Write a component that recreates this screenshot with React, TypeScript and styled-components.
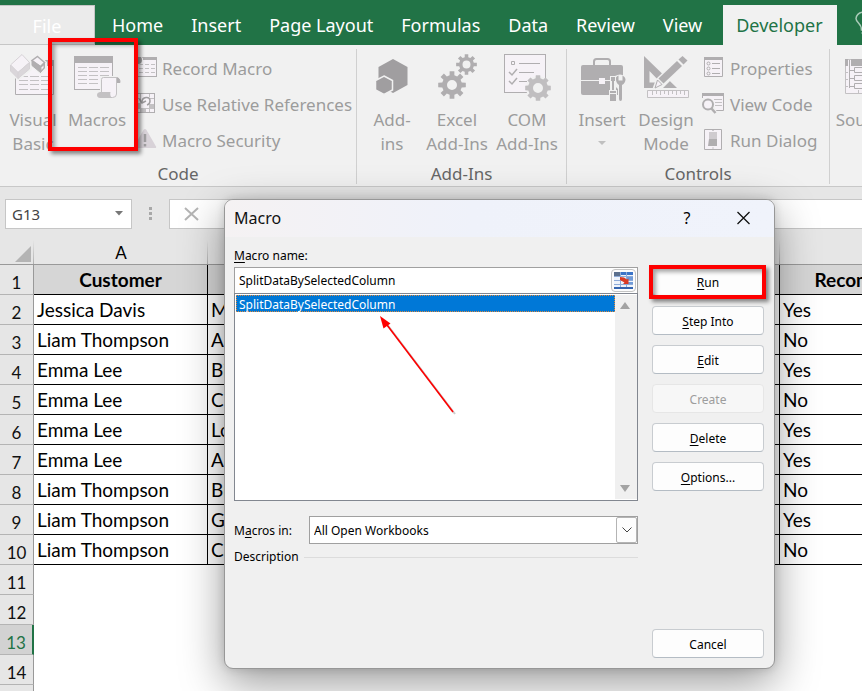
import React from "react";
import styled, { createGlobalStyle, css } from "styled-components";

const uiFont = `"Noto Sans", "Open Sans", sans-serif`;
const cellFont = `Lato, "Open Sans", sans-serif`;
const green = "#217346";

const GlobalStyle = createGlobalStyle`
  *, *::before, *::after { box-sizing: border-box; }
  html, body { margin: 0; background: #fff; overflow: hidden; }
  body { font-family: ${uiFont}; font-size: 17px; color: #000; }
  button, input, select { font: inherit; color: inherit; margin: 0; }
`;

const Page = styled.main`
  position: relative;
  display: flex;
  flex-direction: column;
  height: 100vh;
  overflow: hidden;
`;

/* ---------- Tabs ---------- */
const TabBar = styled.nav`
  flex: none;
  display: flex;
  align-items: stretch;
  padding-top: 5px;
  height: 45px;
  background: ${green};
  overflow: hidden;
`;

const Tab = styled.button<{ $kind?: "file" | "active" }>`
  flex: none;
  padding: 0 14px;
  border: 0;
  background: transparent;
  color: #fff;
  font-size: 18px;
  line-height: 40px;
  white-space: nowrap;
  ${(p) =>
    p.$kind === "file" &&
    css`
      width: 95px;
      margin-right: 3px;
      padding: 2px 0 0;
      line-height: 36px;
      background: #ebebeb;
      border: solid #c6c6c6;
      border-width: 1px 1px 1px 0;
    `}
  ${(p) =>
    p.$kind === "active" &&
    css`
      margin-left: 7px;
      padding: 0 14px 0 13px;
      background: #f1f1f1;
      color: ${green};
    `}
`;

const TellMe = styled.span`
  flex: none;
  margin: 6px 0 0 18px;
  line-height: 0;
`;

/* ---------- Ribbon ---------- */
const Ribbon = styled.section`
  flex: none;
  display: flex;
  height: 142px;
  padding: 4px 0 2px;
  background: #f1f1f1;
  border-bottom: 1px solid #c8c8c8;
`;

const Group = styled.div<{ $width: number }>`
  flex: none;
  display: flex;
  flex-direction: column;
  justify-content: space-between;
  width: ${(p) => p.$width}px;
  border-right: 1px solid #d0d0d0;
`;

const GroupBody = styled.div<{ $pad: number }>`
  display: flex;
  height: 107px;
  padding: 3px 0 0 ${(p) => p.$pad}px;
`;

const GroupLabel = styled.div`
  line-height: 20px;
  text-align: center;
  color: #666;
`;

const LargeButton = styled.button<{ $width: number }>`
  position: relative;
  flex: none;
  display: flex;
  flex-direction: column;
  align-items: center;
  gap: 2px;
  width: ${(p) => p.$width}px;
  height: 104px;
  padding: 0;
  border: 0;
  background: transparent;
  color: #9c9c9c;
  line-height: 24px;
  white-space: pre;
`;

const SmallList = styled.div`
  display: flex;
  flex-direction: column;
  gap: 12px;
  padding: 5px 0 0 5px;
`;

const SmallButton = styled.button`
  display: flex;
  align-items: center;
  gap: 4px;
  height: 24px;
  padding: 0;
  border: 0;
  background: transparent;
  color: #9c9c9c;
  line-height: 24px;
  white-space: nowrap;
`;

const Highlight = styled.span<{ $inset: string }>`
  position: absolute;
  inset: ${(p) => p.$inset};
  border: 4px solid #fe0000;
  box-shadow: 3px 3px 4px rgba(0, 0, 0, 0.45), inset 3px 3px 4px rgba(0, 0, 0, 0.35);
  pointer-events: none;
  z-index: 2;
`;

/* ---------- Formula bar ---------- */
const FormulaBar = styled.section`
  flex: none;
  display: flex;
  align-items: center;
  height: 53px;
  padding-left: 5px;
  background: #e6e6e6;
`;

const NameBox = styled.div`
  flex: none;
  display: flex;
  align-items: center;
  width: 127px;
  height: 30px;
  padding-right: 7px;
  background: #fff;
  border: 1px solid #c6c6c6;
`;

const NameInput = styled.input`
  flex: 1;
  min-width: 0;
  padding: 0 0 0 6px;
  border: 0;
  background: transparent;
  color: #444;
  font-size: 15px;
`;

const Dots = styled.span`
  display: flex;
  flex-direction: column;
  gap: 2px;
  margin: 0 17px;
  i {
    width: 3px;
    height: 3px;
    background: #a8a8a8;
  }
`;

const FormulaBox = styled.div`
  flex: 1;
  display: flex;
  align-items: center;
  height: 30px;
  padding-left: 13px;
  background: #fff;
  border: solid #c6c6c6;
  border-width: 1px 0 1px 1px;
`;

const IconButton = styled.button`
  padding: 0;
  border: 0;
  background: transparent;
  line-height: 0;
`;

/* ---------- Sheet ---------- */
const SheetArea = styled.section`
  flex: 1;
  min-height: 0;
  overflow: hidden;
  background: #fff;
`;

const Sheet = styled.table`
  width: 976px;
  table-layout: fixed;
  border-collapse: separate;
  border-spacing: 0;
  font-family: ${cellFont};
  font-size: 19px;
`;

const ColHead = styled.th`
  height: 25px;
  padding: 2px 0 0;
  background: linear-gradient(#e6e6e6, #b0b0b0) right / 1px 100% no-repeat #e6e6e6;
  border-bottom: 1px solid #999;
  font-weight: 400;
  font-size: 17px;
  line-height: 22px;
`;

const Corner = styled(ColHead)`
  padding: 4px 3px 0 0;
  text-align: right;
  line-height: 0;
`;

const RowHead = styled.th<{ $on?: boolean }>`
  height: 30px;
  padding: 7px 0 0;
  background: ${(p) => (p.$on ? "#d2d2d2" : "#e6e6e6")};
  color: ${(p) => (p.$on ? green : "#111")};
  border-bottom: 1px solid #b4b4b4;
  border-right: ${(p) => (p.$on ? `2px solid ${green}` : "1px solid #999")};
  font-weight: 400;
  font-size: 17px;
  line-height: 22px;
  vertical-align: bottom;
`;

const Cell = styled.td<{ $head?: boolean }>`
  height: 30px;
  padding: 1px 0 0 3px;
  border-right: 1px solid #000;
  border-bottom: 1px solid #000;
  line-height: 26px;
  white-space: nowrap;
  overflow: hidden;
  ${(p) =>
    p.$head &&
    css`
      padding-left: 0;
      background: #d6d6d6;
      font-weight: 700;
      text-align: center;
    `}
`;

/* ---------- Dialog ---------- */
const Dialog = styled.section`
  position: absolute;
  top: 199px;
  left: 224px;
  width: 551px;
  height: 470px;
  display: flex;
  flex-direction: column;
  background: #f0f0f0;
  border: 1px solid #979797;
  border-radius: 9px;
  box-shadow: 0 14px 44px rgba(0, 0, 0, 0.4), 0 0 10px rgba(0, 0, 0, 0.14);
  font-size: 12px;
  line-height: 18px;
  overflow: hidden;
`;

const TitleBar = styled.header`
  display: flex;
  align-items: center;
  height: 37px;
  padding: 0 20px 2px 9px;
  background: linear-gradient(90deg, #f5f2f3, #eff2fa 45%, #f0f3fb);
`;

const Title = styled.h1`
  flex: 1;
  margin: 0;
  font-size: 16px;
  font-weight: 400;
  color: #111;
`;

const HelpButton = styled(IconButton)`
  width: 20px;
  margin-right: 36px;
  font-size: 16px;
  line-height: 20px;
`;

const DialogBody = styled.div`
  flex: 1;
  display: flex;
  gap: 14px;
  padding: 9px 10px 10px 9px;
`;

const Fields = styled.div`
  flex: 1;
  display: flex;
  flex-direction: column;
`;

const FieldLabel = styled.label`
  line-height: 20px;
`;

const NameField = styled.div`
  display: flex;
  align-items: center;
  height: 26px;
  margin-top: 1px;
  padding: 0 1px 0 0;
  background: #fff;
  border: 1px solid #a0a0a0;
  border-bottom: 0;
`;

const MacroInput = styled.input`
  flex: 1;
  min-width: 0;
  padding: 0 4px;
  border: 0;
  background: transparent;
  outline: 0;
`;

const PickButton = styled(IconButton)`
  display: grid;
  place-items: center;
  width: 25px;
  height: 23px;
  background: #fcfcfc;
  border: 1px solid #c4c4c4;
  border-radius: 4px;
`;

const ListFrame = styled.div`
  position: relative;
  display: flex;
  height: 208px;
  padding: 1px 0 1px 1px;
  background: #fff;
  border: 1px solid #828790;
`;

const MacroList = styled.ul`
  flex: 1;
  margin: 0;
  padding: 0;
  list-style: none;
`;

const MacroItem = styled.li`
  height: 17px;
  padding: 0 2px;
  line-height: 17px;
  background: #0078d7;
  color: #fff;
  border: 1px dotted #e08a3c;
`;

const Scroll = styled.div`
  display: flex;
  flex-direction: column;
  justify-content: space-between;
  align-items: center;
  width: 22px;
  padding: 7px 2px 7px 0;
  background: #f0f0f0;
`;

const Arrow = styled.svg`
  position: absolute;
  left: 143px;
  top: 20px;
  pointer-events: none;
`;

const ScopeRow = styled.div`
  display: flex;
  align-items: center;
  justify-content: space-between;
  margin-top: 15px;
  label {
    padding-top: 2px;
  }
`;

const SelectWrap = styled.div`
  position: relative;
  width: 329px;
`;

const Select = styled.select`
  display: block;
  width: 100%;
  height: 28px;
  padding: 2px 4px 0;
  appearance: none;
  background: #fff;
  border: 1px solid #a0a0a0;
  border-radius: 0;
`;

const SelectArrow = styled.span`
  position: absolute;
  right: 1px;
  top: 1px;
  bottom: 1px;
  width: 21px;
  display: grid;
  place-items: center;
  background: #fdfdfd;
  border: 1px solid #b4b4b4;
  border-radius: 2px;
  pointer-events: none;
`;

const Description = styled.div`
  display: flex;
  align-items: center;
  gap: 5px;
  margin-top: 4px;
  &::after {
    content: "";
    flex: 1;
    height: 1px;
    background: #dcdcdc;
  }
`;

const Actions = styled.div`
  display: flex;
  flex-direction: column;
  gap: 10px;
  width: 112px;
  padding-top: 21px;
`;

const ActionButton = styled.button<{ $last?: boolean }>`
  position: relative;
  height: 29px;
  padding: 2px 0 0;
  background: #fdfdfd;
  border: 1px solid #c8ccd0;
  border-bottom-color: #b4bcc4;
  border-radius: 4px;
  ${(p) => p.$last && "margin-top: auto;"}
  &:disabled {
    background: #f7f7f7;
    border-color: #e6e6e6;
    color: #9d9d9d;
  }
`;

const Key = styled.span`
  text-decoration: underline;
  text-underline-offset: 2px;
`;

/* ---------- Icons ---------- */
const MID = "#b0aeb0";
const DARK = "#a09ea0";
const PALE = "#f6f2f7";
const LINE = "#c3c1c3";
const BASE = "#f1f1f1";

const gear = (cx: number, cy: number, outer: number, inner: number, hole: number) => {
  const points: string[] = [];
  for (let i = 0; i < 8; i++) {
    const a = (i * Math.PI) / 4;
    const spots: [number, number][] = [
      [-0.24, inner],
      [-0.17, outer],
      [0.17, outer],
      [0.24, inner],
    ];
    spots.forEach(([d, r]) =>
      points.push(`${(cx + r * Math.cos(a + d)).toFixed(2)} ${(cy + r * Math.sin(a + d)).toFixed(2)}`)
    );
  }
  return `M${points.join("L")}ZM${cx - hole} ${cy}a${hole} ${hole} 0 1 0 ${hole * 2} 0a${hole} ${hole} 0 1 0 ${-hole * 2} 0Z`;
};

const VisualBasicIcon = () => (
  <svg width="46" height="54" viewBox="0 0 46 54">
    <path d="M5.500 14v28.500h38V8.500" fill={PALE} stroke={MID} />
    <path d="M35 8h9v6h-9z" fill={MID} />
    <path d="M9 24.500h33M9 28.500h33M9 32.500h33M9 37.500h33" stroke={LINE} strokeDasharray="9 2" />
    <path d="M12 0 22 11v7L8 29-1 20v-8z" fill={BASE} />
    <path d="M12 2.500 19.500 10.500 8 20.500 .5 13z" fill={PALE} stroke="#d6d2d6" />
    <path d="M.5 13v6L8 26.500v-6zM19.500 10.500v6.500L8 26.500v-6z" fill="#dad6da" stroke="#d6d2d6" />
    <path d="M27 2 37 10v7l-6 6-11-9V9z" fill={BASE} />
    <path d="M27.500 4.500 34.500 10.500 30.500 14.500 22 8.500z" fill={PALE} stroke={MID} strokeWidth="1.500" />
    <path d="M22 8.500v5L30.500 20.500v-6zM34.500 10.500V16L30.500 20.500v-6z" fill={MID} stroke={MID} />
    <path d="M31.500 15.500 33.500 13.500v2l-2 2.500z" fill={PALE} />
  </svg>
);

const MacrosIcon = () => (
  <svg width="48" height="54" viewBox="0 0 48 54">
    <rect x="1.500" y="4.500" width="38" height="33" fill={PALE} stroke={MID} />
    <path d="M1 4h39v7H1z" fill={MID} />
    <path d="M5 15.500h32M5 19.500h32M5 23.500h32M5 27.500h20M5 31.500h20" stroke={LINE} strokeDasharray="9 2" />
    <path d="M27 24h20v7h-2v16H24v-8h3z" fill={BASE} />
    <path d="M43 25.500q4 0 4 5h-4z" fill={MID} stroke={MID} />
    <path d="M28.500 41V27.500q0-2 2-2h13v16.500q0 3.500-4 3.500H34z" fill={PALE} stroke={LINE} />
    <path d="M27 40h10.500q-1 3.500 1.500 6H27q-3-.5-3-3t3-3z" fill={LINE} />
  </svg>
);

const RecordIcon = () => (
  <svg width="24" height="24" viewBox="0 0 24 24">
    <rect x="2.500" y=".500" width="20" height="19" fill={PALE} stroke={MID} />
    <path d="M9 0h14v3H9z" fill={MID} />
    <path d="M5 7.500h16M5 11.500h16M5 15.500h16" stroke={LINE} strokeDasharray="4 2" />
    <circle cx="4" cy="3" r="5" fill={BASE} />
    <circle cx="4" cy="3" r="4" fill={DARK} />
  </svg>
);

const RelativeIcon = () => (
  <svg width="24" height="24" viewBox="0 0 24 24">
    <rect x="1.500" y=".5" width="19" height="19" fill={PALE} stroke={MID} />
    <path d="M2 11h4v4H2zM15 11h5v4h-5zM6 15h5v4H6z" fill={LINE} />
    <path d="M6.500 1v18M11.500 15v4M15.500 1v3M15.500 11v8M2 15.500h18M2 10.500h4M16 5.500h4M2 5.500h4" stroke={LINE} />
    <path d="M8 9q0-4 4-4.500t4 3.500q0 3-3 4" fill="none" stroke={DARK} strokeWidth="1.500" />
    <path d="M5.500 6 8 10l4-2" fill="none" stroke={DARK} strokeWidth="1.500" />
  </svg>
);

const WarningIcon = () => (
  <svg width="24" height="24" viewBox="0 0 24 24">
    <path d="M9.500 1q1.500-2 3 0l9.500 16.500q.5 1.500-1 1.500H1q-1.500 0-1-1.500z" fill="#d8d2d8" />
    <path d="M11 5v8M11 15v2.500" stroke={DARK} strokeWidth="2.500" />
  </svg>
);

const AddInsIcon = () => (
  <svg width="36" height="54" viewBox="0 0 36 54">
    <path d="M19 7 33.500 15v18L19 41 4.500 33V15z" fill={DARK} />
    <path d="M10 24 18.500 28.500v9.500L10 42.500 1.500 38v-9.500z" fill={DARK} stroke={BASE} strokeWidth="1.500" />
  </svg>
);

const ExcelGearsIcon = () => (
  <svg width="42" height="54" viewBox="0 0 42 54">
    <path d={gear(30.5, 12.5, 10.5, 7.5, 4)} fill={MID} fillRule="evenodd" />
    <path d={gear(16, 33, 14, 10, 5)} fill={MID} fillRule="evenodd" />
  </svg>
);

const ComIcon = () => (
  <svg width="48" height="54" viewBox="0 0 48 54">
    <rect x="1.500" y="2.500" width="41" height="38" fill={PALE} stroke={MID} />
    <path d="M8.500 9.500h3v3h-3zM16 11.500h21M16 20.500h15M16 29.500h8" fill="none" stroke={MID} />
    <path d="m6 20 3 3 5-6M6 29l3 3 5-6" fill="none" stroke={MID} strokeWidth="1.500" />
    <circle cx="35" cy="36" r="12" fill={BASE} />
    <path d={gear(35, 36, 13, 10, 5)} fill="#c0bec0" fillRule="evenodd" />
  </svg>
);

const ToolboxIcon = () => (
  <svg width="48" height="54" viewBox="0 0 48 54">
    <path d="M16 13V9.500q0-2.500 2.500-2.500h11q2.500 0 2.500 2.500V13" fill="none" stroke={MID} strokeWidth="2" />
    <rect x="3" y="13" width="42" height="30" rx="2" fill={MID} />
    <path d="M3 28.500h42" stroke={BASE} />
    <path d="M21 26h6v6h-6z" fill={PALE} />
    <path d="M32 24h6v14h1v12h-8V38h1z" fill={BASE} />
    <path d="M37 24q5-3 10 0l1 8-3 4v15h-5V37l-3-3z" fill={BASE} />
    <path d="M33 25h4v4h-1v9h-2v-9h-1zM32 39h6v2h-6zM32 42h6v7h-6z" fill={MID} />
    <path d="M38 25.500q1-1.500 2.500-2v5h4v-5q2.500 1 3 3.500 0 4-3.500 6v14q0 2-1.500 2t-1.500-2V33Q37.500 31 38 25.500z" fill={MID} />
  </svg>
);

const DesignIcon = () => (
  <svg width="46" height="54" viewBox="0 0 46 54">
    <path d="M1 4 34 36H1zM6.500 19v11.500h11z" fill={MID} fillRule="evenodd" />
    <path d="m9 38 4-11L38 3l8 7-26 26z" fill={BASE} />
    <path d="M15.500 26.500 34 9l5 5-18.500 17.500z" fill={MID} />
    <path d="m35.500 7.500 4-3.500 5 4.500-4 4z" fill={MID} />
    <path d="m14.500 28 4.500 4.500-7 3.500z" fill={PALE} stroke={MID} />
    <path d="M4.500 38.500h41v7h-41z" fill={PALE} stroke={LINE} />
    <path d="M9.500 39v4M13.500 39v3M17.500 39v4M21.500 39v3M25.500 39v4M29.500 39v3M33.500 39v4M37.500 39v3M41.500 39v4" stroke={LINE} />
  </svg>
);

const PropertiesIcon = () => (
  <svg width="24" height="24" viewBox="0 0 24 24">
    <path d="M2.500.5h18v19h-18z" fill={PALE} stroke={MID} />
    <path d="M2 0h19v3H2z" fill={MID} />
    <path d="M10 6.500h8M10 11.500h8M10 16.500h8" stroke={MID} />
    <g fill="none" stroke={MID}>
      <circle cx="6.500" cy="6.500" r="1.500" />
      <circle cx="6.500" cy="11.500" r="1.500" />
      <circle cx="6.500" cy="16.500" r="1.500" />
    </g>
  </svg>
);

const ViewCodeIcon = () => (
  <svg width="24" height="24" viewBox="0 0 24 24">
    <path d="M.5.500h21v17H.5z" fill={PALE} stroke={MID} />
    <path d="M0 0h22v3H0z" fill={MID} />
    <path d="M12 6.500h8M13 9.500h7M13 12.500h7" stroke={LINE} />
    <path d="M-1 5h9q5 3 4 8l3 6H0z" fill={BASE} />
    <circle cx="6" cy="11.500" r="5" fill={PALE} stroke={MID} strokeWidth="2" />
    <path d="m9.500 15.500 4 4.500" stroke={MID} strokeWidth="2.500" />
  </svg>
);

const RunDialogIcon = () => (
  <svg width="24" height="24" viewBox="0 0 24 24">
    <path d="M2.500.5h17v20h-17z" fill={PALE} stroke={MID} />
    <path d="M7 3h8v7H7z" fill="#cfcbcf" />
    <path d="M7 10h8v7H6z" fill={MID} />
    <path d="M10.500 1.500h1M10.500 19h1" stroke={DARK} />
  </svg>
);

const SourceIcon = () => (
  <svg width="36" height="54" viewBox="0 0 36 54">
    <path d="M.5 7.500h35v34H.5z" fill={PALE} stroke={LINE} />
    <path d="M0 7h3v7H0zM6 7h30v7H6z" fill={MID} />
    <path d="M0 20.500h3M0 27.500h3M0 34.500h3M13.500 38v3M25.500 38v3" stroke={LINE} />
    <path d="M4.500 8v28M4.500 18.500h5M4.500 26.500h5M4.500 34.500h5" stroke={MID} fill="none" />
    <path d="M9.500 15.500h22v5h-22zM9.500 23.500h22v5h-22zM9.500 31.500h22v5h-22z" fill={PALE} stroke={MID} />
  </svg>
);

const BulbIcon = () => (
  <svg width="20" height="28" viewBox="0 0 20 28" fill="none" stroke="#a9cbb8" strokeWidth="1.500">
    <path d="M6.500 19q0-4-3-7Q1 9.500 1 7.500 2 1 10 1t9 6.500q0 2-2.500 4.500-3 3-3 7zM6.500 22h7M7.500 25h5" />
  </svg>
);

const PickIcon = () => (
  <svg width="19" height="17" viewBox="0 0 19 17">
    <path d="M0 0h19v17H0z" fill="#eef3fb" />
    <path d="M0 0h7v4H0z" fill="#5b6f8c" />
    <path d="M7 0h12v3H7z" fill="#3b74c8" />
    <path d="M13 5h6v3h-6zM13 10h6v3h-6z" fill="#6f9ad8" />
    <path d="M6.500 0v17M12.500 0v17M0 4.500h19M0 8.500h19M0 12.500h19" stroke="#8eabd8" />
    <path d="M0 16h19" stroke="#3565b0" strokeWidth="2" />
    <path d="m6 5 4 .5 3 2 1.500-1V12H9l1.500-1.500L6 8z" fill="#d93a24" />
  </svg>
);

const rows: [string, string, string][] = [
  ["Jessica Davis", "M", "Yes"],
  ["Liam Thompson", "Au", "No"],
  ["Emma Lee", "Bi", "Yes"],
  ["Emma Lee", "Cl", "No"],
  ["Emma Lee", "Lo", "Yes"],
  ["Emma Lee", "Au", "Yes"],
  ["Liam Thompson", "Br", "No"],
  ["Liam Thompson", "G", "Yes"],
  ["Liam Thompson", "Ca", "No"],
];

const menuTabs = ["Home", "Insert", "Page Layout", "Formulas", "Data", "Review", "View"];

const actions = [
  { name: "Step Into" },
  { name: "Edit" },
  { name: "Create", disabled: true },
  { name: "Delete" },
  { name: "Options..." },
];

export default function App() {
  return (
    <>
      <GlobalStyle />
      <Page>
        <TabBar>
          <Tab $kind="file">File</Tab>
          {menuTabs.map((t) => (
            <Tab key={t}>{t}</Tab>
          ))}
          <Tab $kind="active">Developer</Tab>
          <TellMe>
            <BulbIcon />
          </TellMe>
        </TabBar>

        <Ribbon>
          <Group $width={357}>
            <GroupBody $pad={1}>
              <LargeButton $width={64}>
                <VisualBasicIcon />
                {"Visual\nBasic"}
              </LargeButton>
              <LargeButton $width={64}>
                <MacrosIcon />
                Macros
                <Highlight $inset="-14px -9px 5px -17px" />
              </LargeButton>
              <SmallList>
                <SmallButton>
                  <RecordIcon />
                  Record Macro
                </SmallButton>
                <SmallButton>
                  <RelativeIcon />
                  Use Relative References
                </SmallButton>
                <SmallButton>
                  <WarningIcon />
                  Macro Security
                </SmallButton>
              </SmallList>
            </GroupBody>
            <GroupLabel>Code</GroupLabel>
          </Group>
          <Group $width={210}>
            <GroupBody $pad={5}>
              <LargeButton $width={60}>
                <AddInsIcon />
                {"Add-\nins"}
              </LargeButton>
              <LargeButton $width={70}>
                <ExcelGearsIcon />
                {"Excel\nAdd-Ins"}
              </LargeButton>
              <LargeButton $width={70}>
                <ComIcon />
                {"COM\nAdd-Ins"}
              </LargeButton>
            </GroupBody>
            <GroupLabel>Add-Ins</GroupLabel>
          </Group>
          <Group $width={263}>
            <GroupBody $pad={2}>
              <LargeButton $width={66}>
                <ToolboxIcon />
                Insert
                <svg width="8" height="20" viewBox="0 0 8 20">
                  <path d="M0 7h8l-4 4z" fill="#c0c0c0" />
                </svg>
              </LargeButton>
              <LargeButton $width={62}>
                <DesignIcon />
                {"Design\nMode"}
              </LargeButton>
              <SmallList>
                <SmallButton>
                  <PropertiesIcon />
                  Properties
                </SmallButton>
                <SmallButton>
                  <ViewCodeIcon />
                  View Code
                </SmallButton>
                <SmallButton>
                  <RunDialogIcon />
                  Run Dialog
                </SmallButton>
              </SmallList>
            </GroupBody>
            <GroupLabel>Controls</GroupLabel>
          </Group>
          <Group $width={160}>
            <GroupBody $pad={0}>
              <LargeButton $width={66}>
                <SourceIcon />
                Source
              </LargeButton>
            </GroupBody>
          </Group>
        </Ribbon>

        <FormulaBar>
          <NameBox>
            <NameInput aria-label="Name box" defaultValue="G13" />
            <svg width="9" height="5" viewBox="0 0 9 5">
              <path d="M0 0h8L4 4.500z" fill="#777" />
            </svg>
          </NameBox>
          <Dots>
            <i />
            <i />
            <i />
          </Dots>
          <FormulaBox>
            <IconButton aria-label="Cancel entry">
              <svg width="18" height="16" viewBox="0 0 18 16">
                <path d="m2 2 13 12M15 2 2 14" stroke="#b4b4b4" strokeWidth="2" />
              </svg>
            </IconButton>
          </FormulaBox>
        </FormulaBar>

        <SheetArea>
          <Sheet>
            <colgroup>
              <col width="34" />
              <col width="174" />
              <col width="572" />
              <col width="196" />
            </colgroup>
            <thead>
              <tr>
                <Corner>
                  <svg width="16" height="16" viewBox="0 0 16 16">
                    <path d="M16 0v16H0z" fill="#b4b4b4" />
                  </svg>
                </Corner>
                <ColHead>A</ColHead>
                <ColHead />
                <ColHead />
              </tr>
            </thead>
            <tbody>
              <tr>
                <RowHead>1</RowHead>
                <Cell $head>Customer</Cell>
                <Cell $head />
                <Cell $head>Recommended</Cell>
              </tr>
              {rows.map((r, i) => (
                <tr key={i}>
                  <RowHead>{i + 2}</RowHead>
                  {r.map((c, j) => (
                    <Cell key={j}>{c}</Cell>
                  ))}
                </tr>
              ))}
              {[11, 12, 13, 14].map((n) => (
                <tr key={n}>
                  <RowHead $on={n === 13}>{n}</RowHead>
                </tr>
              ))}
              <tr>
                <RowHead />
              </tr>
            </tbody>
          </Sheet>
        </SheetArea>

        <Dialog role="dialog" aria-labelledby="dialog-title">
          <TitleBar>
            <Title id="dialog-title">Macro</Title>
            <HelpButton aria-label="Help">?</HelpButton>
            <IconButton aria-label="Close">
              <svg width="21" height="14" viewBox="0 0 21 14">
                <path d="m4.500 1 12 12M16.500 1l-12 12" stroke="#111" strokeWidth="1.300" />
              </svg>
            </IconButton>
          </TitleBar>
          <DialogBody>
            <Fields>
              <FieldLabel htmlFor="macro-name">
                <Key>M</Key>acro name:
              </FieldLabel>
              <NameField>
                <MacroInput id="macro-name" defaultValue="SplitDataBySelectedColumn" />
                <PickButton aria-label="Select range">
                  <PickIcon />
                </PickButton>
              </NameField>
              <ListFrame>
                <MacroList role="listbox" aria-label="Macros">
                  <MacroItem role="option" aria-selected="true">
                    SplitDataBySelectedColumn
                  </MacroItem>
                </MacroList>
                <Scroll>
                  <svg width="10" height="8" viewBox="0 0 10 8">
                    <path d="m5 0 5 7H0z" fill="#a3a3a3" />
                  </svg>
                  <svg width="10" height="8" viewBox="0 0 10 8">
                    <path d="M0 1h10L5 8z" fill="#a3a3a3" />
                  </svg>
                </Scroll>
                <Arrow width="80" height="102" viewBox="0 0 80 102">
                  <path d="m8 9 69 91" stroke="#999" strokeWidth="2" opacity=".5" />
                  <path d="m6 7 69 91" stroke="#fe0000" strokeWidth="1.600" />
                  <path d="m2 2 10.500 7.500-7 5z" fill="#fe0000" />
                </Arrow>
              </ListFrame>
              <ScopeRow>
                <label htmlFor="macro-scope">
                  M<Key>a</Key>cros in:
                </label>
                <SelectWrap>
                  <Select id="macro-scope">
                    <option>All Open Workbooks</option>
                  </Select>
                  <SelectArrow>
                    <svg width="10" height="6" viewBox="0 0 10 6">
                      <path d="m.5.5 4.500 4.500L9.500.5" fill="none" stroke="#444" />
                    </svg>
                  </SelectArrow>
                </SelectWrap>
              </ScopeRow>
              <Description>Description</Description>
            </Fields>
            <Actions>
              <ActionButton>
                <Key>R</Key>un
                <Highlight $inset="-3px -3px -4px -4px" />
              </ActionButton>
              {actions.map((a) => (
                <ActionButton key={a.name} disabled={a.disabled}>
                  {a.disabled ? (
                    a.name
                  ) : (
                    <>
                      <Key>{a.name[0]}</Key>
                      {a.name.slice(1)}
                    </>
                  )}
                </ActionButton>
              ))}
              <ActionButton $last>Cancel</ActionButton>
            </Actions>
          </DialogBody>
        </Dialog>
      </Page>
    </>
  );
}
